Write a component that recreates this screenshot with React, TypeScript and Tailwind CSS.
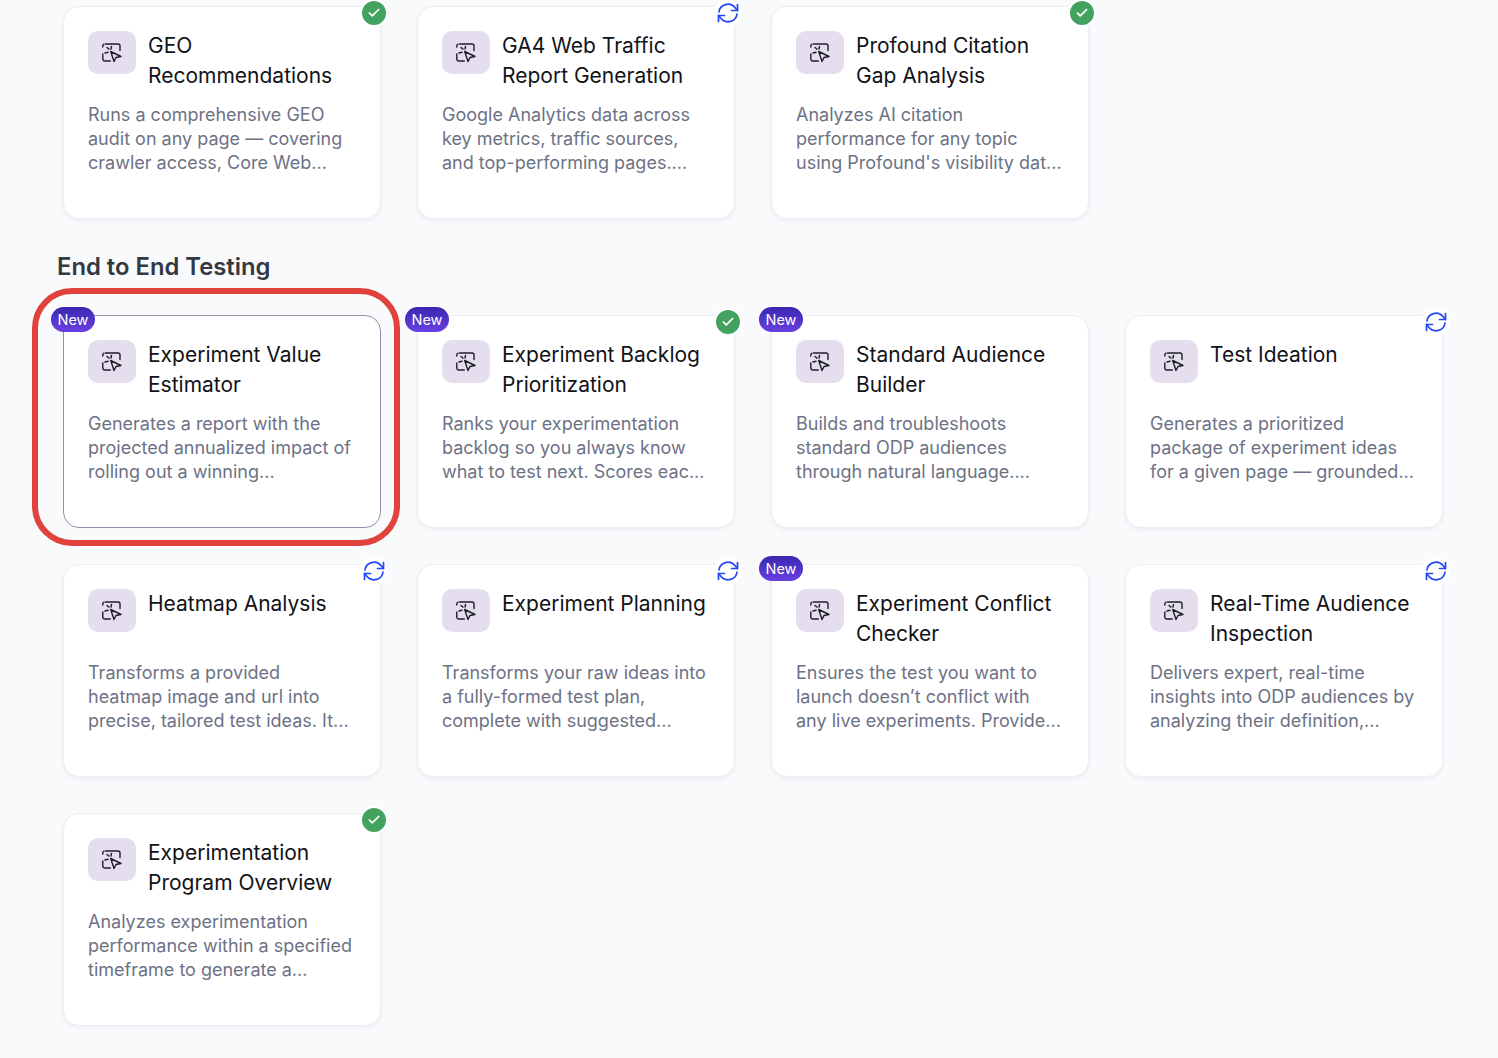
import { Check } from "lucide-react"

type Status = "done" | "sync" | "none"

type Tool = {
  title: string
  lines: string[]
  status: Status
  isNew?: boolean
  highlighted?: boolean
}

const topTools: Tool[] = [
  {
    title: "GEO Recommendations",
    lines: ["Runs a comprehensive GEO", "audit on any page — covering", "crawler access, Core Web..."],
    status: "done",
  },
  {
    title: "GA4 Web Traffic Report Generation",
    lines: ["Google Analytics data across", "key metrics, traffic sources,", "and top-performing pages...."],
    status: "sync",
  },
  {
    title: "Profound Citation Gap Analysis",
    lines: ["Analyzes AI citation", "performance for any topic", "using Profound's visibility dat..."],
    status: "done",
  },
]

const testingTools: Tool[] = [
  {
    title: "Experiment Value Estimator",
    lines: ["Generates a report with the", "projected annualized impact of", "rolling out a winning..."],
    status: "none",
    isNew: true,
    highlighted: true,
  },
  {
    title: "Experiment Backlog Prioritization",
    lines: ["Ranks your experimentation", "backlog so you always know", "what to test next. Scores eac..."],
    status: "done",
    isNew: true,
  },
  {
    title: "Standard Audience Builder",
    lines: ["Builds and troubleshoots", "standard ODP audiences", "through natural language...."],
    status: "none",
    isNew: true,
  },
  {
    title: "Test Ideation",
    lines: ["Generates a prioritized", "package of experiment ideas", "for a given page — grounded..."],
    status: "sync",
  },
  {
    title: "Heatmap Analysis",
    lines: ["Transforms a provided", "heatmap image and url into", "precise, tailored test ideas. It..."],
    status: "sync",
  },
  {
    title: "Experiment Planning",
    lines: ["Transforms your raw ideas into", "a fully-formed test plan,", "complete with suggested..."],
    status: "sync",
  },
  {
    title: "Experiment Conflict Checker",
    lines: ["Ensures the test you want to", "launch doesn’t conflict with", "any live experiments. Provide..."],
    status: "none",
    isNew: true,
  },
  {
    title: "Real-Time Audience Inspection",
    lines: ["Delivers expert, real-time", "insights into ODP audiences by", "analyzing their definition,..."],
    status: "sync",
  },
  {
    title: "Experimentation Program Overview",
    lines: ["Analyzes experimentation", "performance within a specified", "timeframe to generate a..."],
    status: "done",
  },
]

function ToolIcon() {
  return (
    <svg width="20" height="20" viewBox="0 0 20 20" fill="none" stroke="#1f1f27" strokeWidth="1.4" strokeLinecap="round" strokeLinejoin="round" className="overflow-visible">
      <path d="M3.5 1h12.5a2 2 0 0 1 2 2v4.5" />
      <path d="M0.8 4V3a2 2 0 0 1 1.2-1.8" />
      <path d="M0.8 11v5a2 2 0 0 0 2 2h5.5" />
      <path d="M8.7 8.5l10.3 5-5 1-2 4z" />
      <path d="M5 4.5l2 1.6" />
      <path d="M3 10l3-.7" />
      <path d="M9.5 3.5l-.5 2.5" />
    </svg>
  )
}

function SyncIcon() {
  return (
    <svg width="24" height="24" viewBox="0 0 24 24" fill="none" stroke="#2446f5" strokeWidth="1.7" strokeLinecap="round" strokeLinejoin="round">
      <path d="M3 11a9 8.5 0 0 1 16-4.5l2.4 3" />
      <path d="M21.5 3.5v6h-6" />
      <path d="M21 13a9 8.5 0 0 1-16 4.5l-2.4-3" />
      <path d="M2.5 20.5v-6h6" />
    </svg>
  )
}

function ToolCard({ tool }: { tool: Tool }) {
  return (
    <div
      className={`relative h-[213px] rounded-2xl border bg-white px-6 pt-6 ${
        tool.highlighted ? "border-[#8b93a7]" : "border-[#eceef4] shadow-[0_2px_4px_rgba(30,40,80,0.06)]"
      }`}
    >
      {tool.isNew && (
        <span className="absolute -left-[13px] -top-[9px] flex h-[25px] w-[44px] items-center justify-center rounded-full bg-gradient-to-b from-[#3a27b0] to-[#6a40e2] text-[14.5px] text-white">
          New
        </span>
      )}
      {tool.status === "done" && (
        <span className="absolute -top-[8px] right-[-8px] flex h-[28px] w-[28px] items-center justify-center rounded-full border-2 border-white bg-[#43a25f]">
          <Check size={14} strokeWidth={3} className="text-white" />
        </span>
      )}
      {tool.status === "sync" && (
        <span className="absolute -top-[8px] right-[-8px] flex h-[28px] w-[28px] items-center justify-center rounded-full bg-white">
          <SyncIcon />
        </span>
      )}
      <div className="flex items-start gap-3">
        <div className="flex h-[43px] w-[48px] shrink-0 items-center justify-center rounded-[10px] bg-[#e4deef]">
          <ToolIcon />
        </div>
        <h3 className="h-[60px] text-[21px] leading-[30px] font-normal text-[#111318]">{tool.title}</h3>
      </div>
      <p className="mt-3 text-[18px] leading-6 text-[#6d7285]">
        {tool.lines.map((line) => (
          <span key={line} className="block whitespace-nowrap">
            {line}
          </span>
        ))}
      </p>
    </div>
  )
}

export default function App() {
  return (
    <div className="relative h-[1058px] overflow-hidden bg-[#f9fafc] pl-[63px] pt-[6px] font-['Inter',sans-serif]">
      <div className="grid grid-cols-[repeat(4,318px)] gap-x-9">
        {topTools.map((tool) => (
          <ToolCard key={tool.title} tool={tool} />
        ))}
      </div>
      <h2 className="mb-[31px] -ml-[6px] mt-[31px] text-[23.8px] leading-[34px] font-semibold text-[#343841]">End to End Testing</h2>
      <div className="grid grid-cols-[repeat(4,318px)] gap-x-9 gap-y-9">
        {testingTools.map((tool) => (
          <ToolCard key={tool.title} tool={tool} />
        ))}
      </div>
      {/* annotation drawn over the first card */}
      <div className="pointer-events-none absolute left-[32px] top-[288px] h-[258px] w-[368px] rounded-[40px] border-[6px] border-[#e0433c]" />
    </div>
  )
}
